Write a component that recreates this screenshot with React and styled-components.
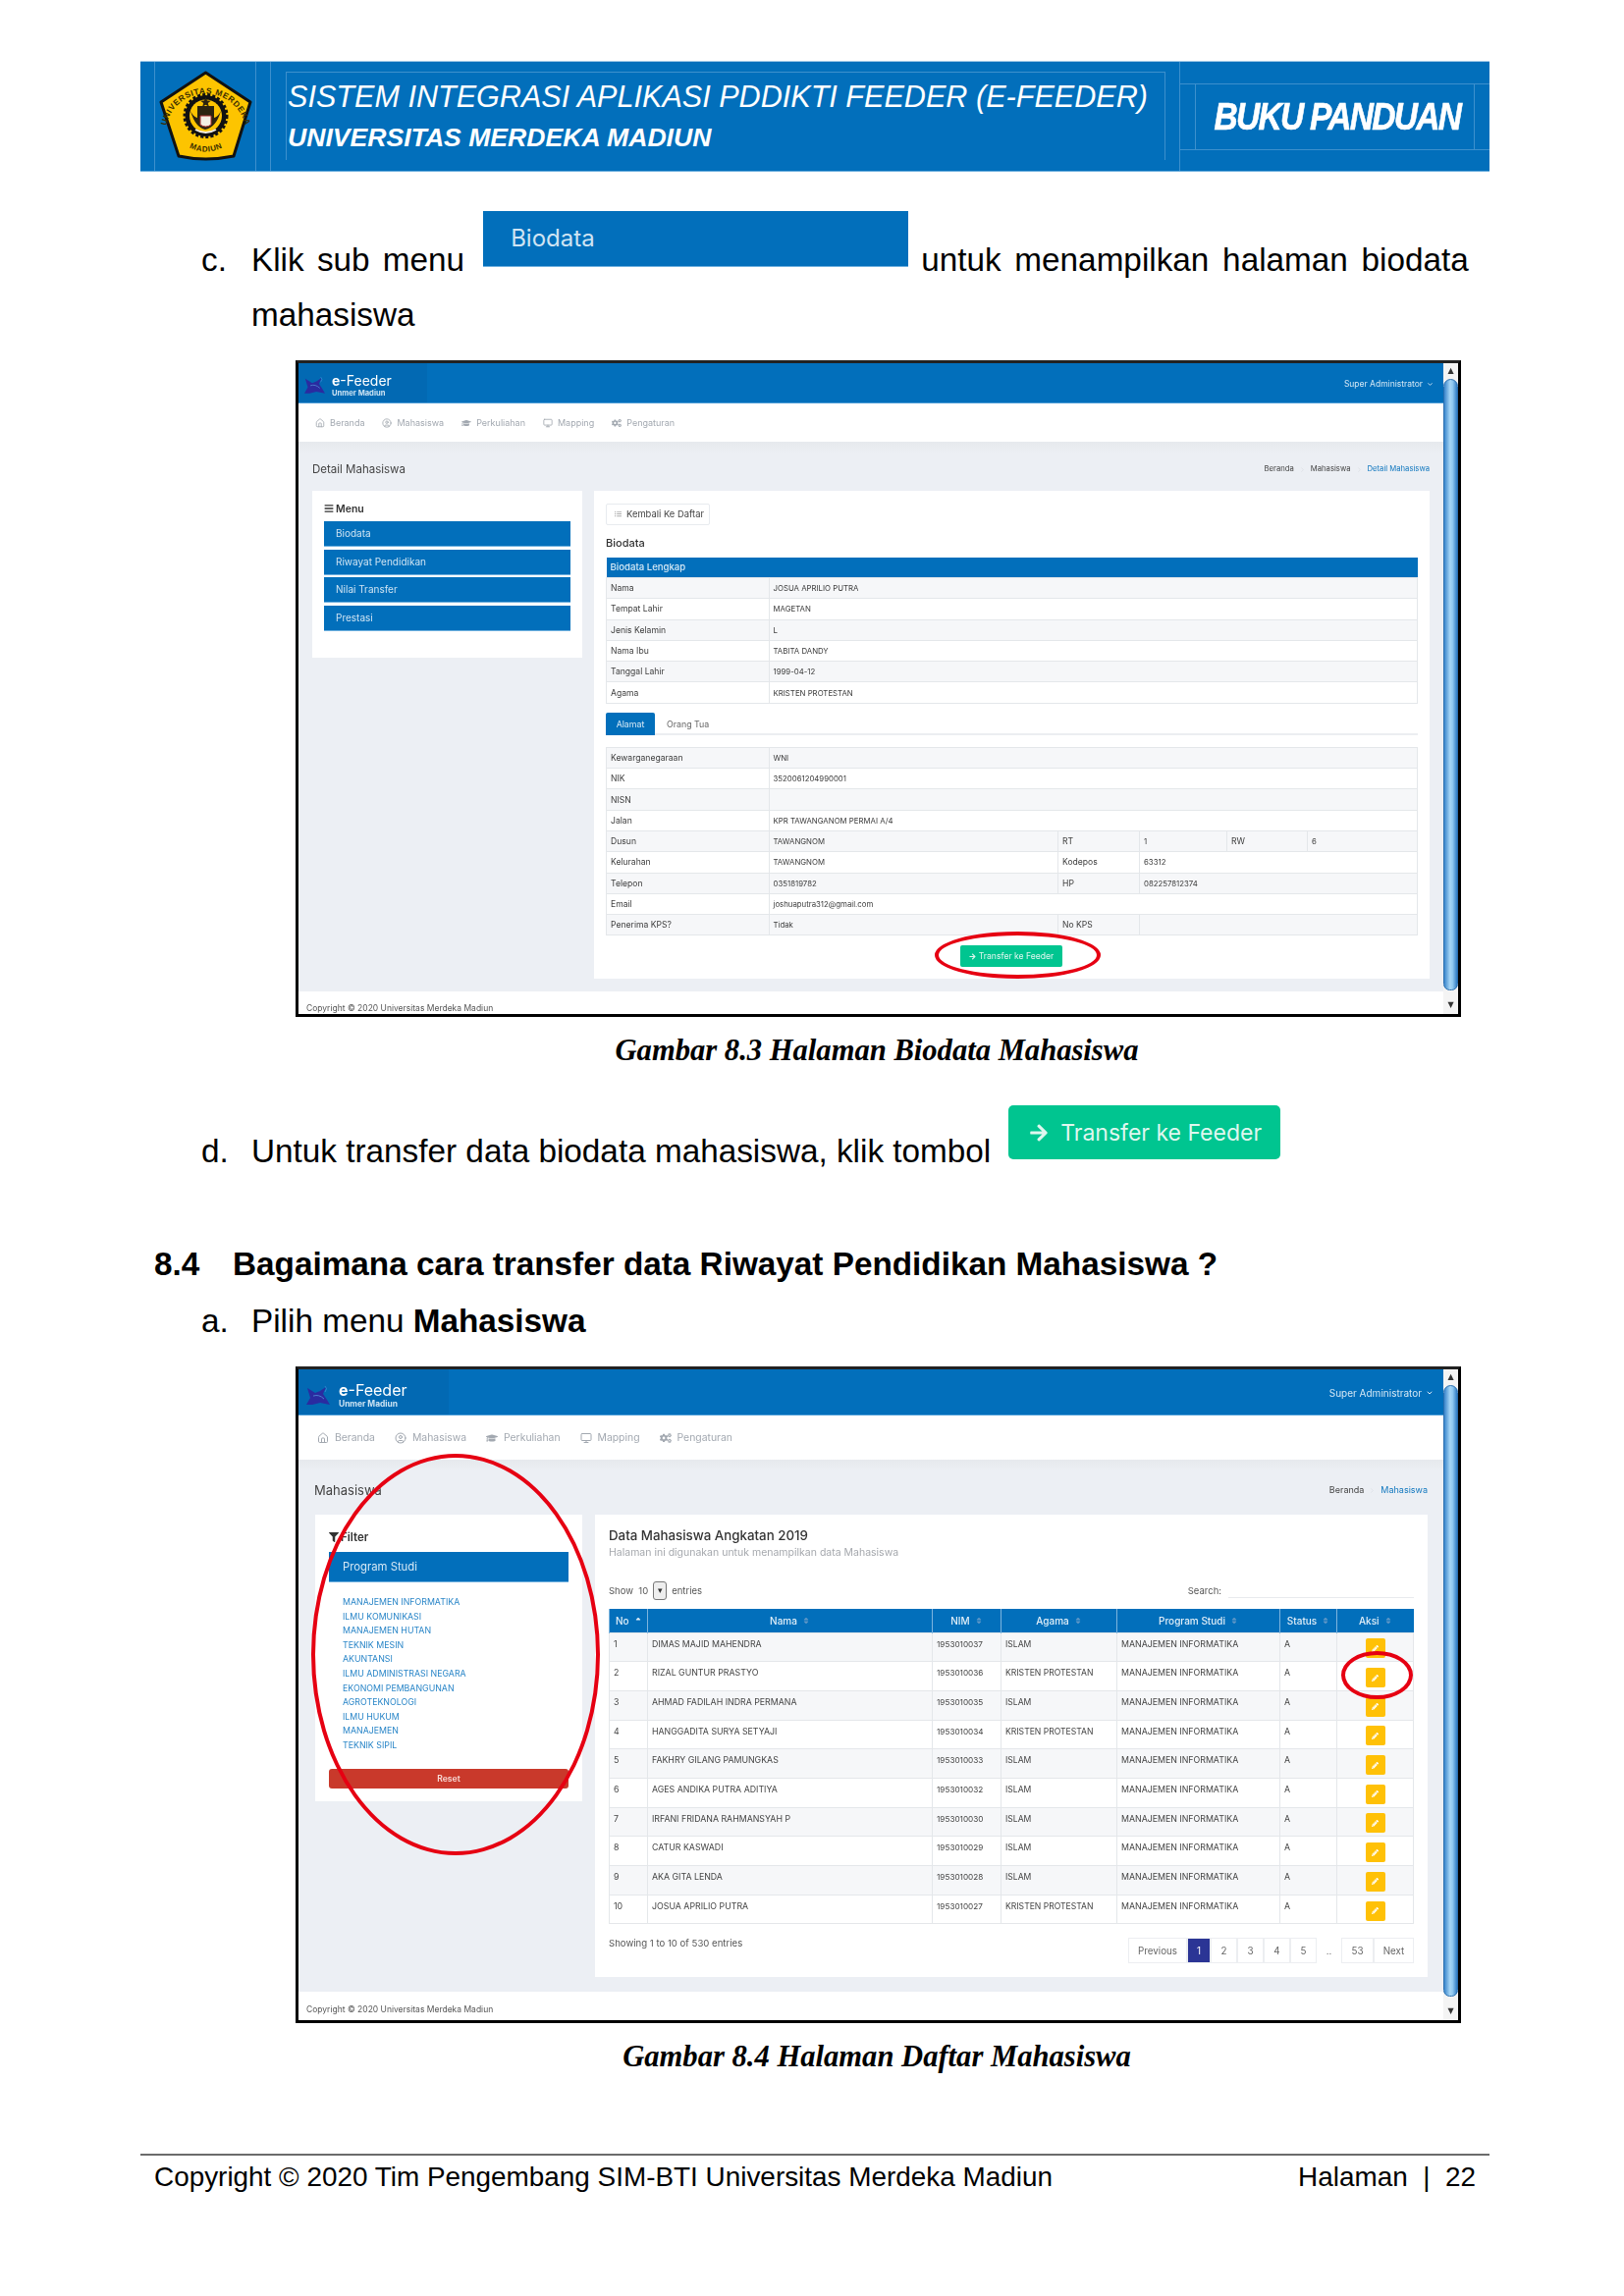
import React from 'react';
import styled, { createGlobalStyle } from 'styled-components';
import { Home, CircleUser, Monitor, ChevronDown, ChevronRight } from 'lucide-react';
import { FaGraduationCap, FaCogs, FaFilter, FaBars, FaArrowRight, FaPencilAlt, FaListUl, FaSort, FaSortUp } from 'react-icons/fa';

const BLUE = '#026fbb';
const APP_FONT = 'Inter, "Noto Sans", sans-serif';

const biodata = [
  ['Nama', 'JOSUA APRILIO PUTRA'],
  ['Tempat Lahir', 'MAGETAN'],
  ['Jenis Kelamin', 'L'],
  ['Nama Ibu', 'TABITA DANDY'],
  ['Tanggal Lahir', '1999-04-12'],
  ['Agama', 'KRISTEN PROTESTAN'],
];

const prodi = [
  'MANAJEMEN INFORMATIKA', 'ILMU KOMUNIKASI', 'MANAJEMEN HUTAN', 'TEKNIK MESIN', 'AKUNTANSI',
  'ILMU ADMINISTRASI NEGARA', 'EKONOMI PEMBANGUNAN', 'AGROTEKNOLOGI', 'ILMU HUKUM', 'MANAJEMEN', 'TEKNIK SIPIL',
];

const students = [
  ['1', 'DIMAS MAJID MAHENDRA', '1953010037', 'ISLAM'],
  ['2', 'RIZAL GUNTUR PRASTYO', '1953010036', 'KRISTEN PROTESTAN'],
  ['3', 'AHMAD FADILAH INDRA PERMANA', '1953010035', 'ISLAM'],
  ['4', 'HANGGADITA SURYA SETYAJI', '1953010034', 'KRISTEN PROTESTAN'],
  ['5', 'FAKHRY GILANG PAMUNGKAS', '1953010033', 'ISLAM'],
  ['6', 'AGES ANDIKA PUTRA ADITIYA', '1953010032', 'ISLAM'],
  ['7', 'IRFANI FRIDANA RAHMANSYAH P', '1953010030', 'ISLAM'],
  ['8', 'CATUR KASWADI', '1953010029', 'ISLAM'],
  ['9', 'AKA GITA LENDA', '1953010028', 'ISLAM'],
  ['10', 'JOSUA APRILIO PUTRA', '1953010027', 'KRISTEN PROTESTAN'],
];

function UnivLogo () {
  return (
    <svg width="95" height="93" viewBox="0 0 95 93">
      <defs>
        <path id="arcTop" d="M7 58 A41 41 0 0 1 88 58" />
        <path id="arcBottom" d="M25 75 Q47 90 71 75" />
      </defs>
      <path d="M47.5 2 L93 32 L76 87 Q47 93 20 87 L2 32 Z" fill="#fdc400" stroke="#111" strokeWidth="3" strokeLinejoin="round" />
      <text fontFamily="Liberation Sans, sans-serif" fontWeight="700" fontSize="8.4" fill="#3a2d00" letterSpacing=".6">
        <textPath href="#arcTop" startOffset="50%" textAnchor="middle">UNIVERSITAS MERDEKA</textPath>
      </text>
      <text fontFamily="Liberation Sans, sans-serif" fontWeight="700" fontSize="8" fill="#3a2d00" letterSpacing=".6">
        <textPath href="#arcBottom" startOffset="50%" textAnchor="middle">MADIUN</textPath>
      </text>
      <circle cx="47.5" cy="46" r="21" fill="#111" stroke="#111" strokeWidth="4" strokeDasharray="3 2" />
      <circle cx="47.5" cy="46" r="16.5" fill="#fdc400" />
      <path d="M32 41 Q37 58 47 60 Q58 58 63 41 Q60 47 56 48 L56 36 L39 36 L39 48 Q35 47 32 41 Z" fill="#2b2410" />
      <path d="M42 46 h11 v9 q-5.5 4-11 0 Z" fill="#f2efe4" stroke="#a33" strokeWidth="1" />
      <path d="M47.5 27 l1.5 3.6 3.8 .2-3 2.3 1.1 3.7-3.4-2.1-3.4 2.1 1.1-3.7-3-2.3 3.8-.2 Z" fill="#2b2410" />
      <path d="M37 60 Q47.5 66 58 60" fill="none" stroke="#f2efe4" strokeWidth="2" />
    </svg>
  );
}

function FeederLogo ({ size }) {
  return (
    <svg width={size} height={size * 0.84} viewBox="0 0 24 20">
      <path d="M1 2 L9 7 L14 5 L20 1 L17 8 L21 14 L24 19 L14 17 L6 19 L0 19 L4 12 Z" fill="#2a2ba0" />
      <path d="M7 10 Q13 8 18 13" fill="none" stroke="#4d7fd0" strokeWidth="1" />
      <path d="M19 0 Q22 2 19 6" fill="none" stroke="#3d8fd8" strokeWidth=".8" />
    </svg>
  );
}

function Scrollbar () {
  return (
    <ScrollColumn>
      <ScrollArrow>▲</ScrollArrow>
      <ScrollThumb />
      <ScrollArrow $bottom>▼</ScrollArrow>
    </ScrollColumn>
  );
}

function TopBar ({ big, logoSize, user }) {
  return (
    <Bar $big={big}>
      <Brand $big={big}>
        <FeederLogo size={logoSize} />
        <BrandText>
          <BrandName $big={big}><b>e</b>-Feeder</BrandName>
          <BrandSub $big={big}>Unmer Madiun</BrandSub>
        </BrandText>
      </Brand>
      <User $big={big}>{user} <ChevronDown size={big ? 8 : 7} strokeWidth={3} /></User>
    </Bar>
  );
}

function NavBar ({ big }) {
  const size = big ? 12 : 10;
  const items = [
    [<Home size={size} key="h" />, 'Beranda'],
    [<CircleUser size={size} key="u" />, 'Mahasiswa'],
    [<FaGraduationCap size={size} key="g" />, 'Perkuliahan'],
    [<Monitor size={size} key="m" />, 'Mapping'],
    [<FaCogs size={size} key="c" />, 'Pengaturan'],
  ];

  return (
    <Nav $big={big}>
      {items.map(([icon, label]) => <NavItem $big={big} key={label}>{icon}<span>{label}</span></NavItem>)}
    </Nav>
  );
}

function Crumbs ({ items, big }) {
  return (
    <CrumbRow $big={big}>
      {items.map((item, i) => (
        <React.Fragment key={item}>
          {i > 0 && <ChevronRight size={7} color="#d5d9df" />}
          <Crumb $active={i === items.length - 1}>{item}</Crumb>
        </React.Fragment>
      ))}
    </CrumbRow>
  );
}

function DetailShot () {
  return (
    <Frame $top={26}>
      <AppMain>
        <TopBar logoSize={21} user="Super Administrator" />
        <NavBar />
        <AppBody $h={560} $right={14}>
          <TitleRow $h={50} $pad={14}>
            <PageTitle>Detail Mahasiswa</PageTitle>
            <Crumbs items={['Beranda', 'Mahasiswa', 'Detail Mahasiswa']} />
          </TitleRow>
          <Cards $left={14}>
            <MenuCard>
              <MenuTitle><FaBars size={10} /> Menu</MenuTitle>
              {['Biodata', 'Riwayat Pendidikan', 'Nilai Transfer', 'Prestasi'].map(m => <MenuItem key={m}>{m}</MenuItem>)}
            </MenuCard>
            <DetailCard>
              <BackButton><FaListUl size={7} color="#aaa" /> Kembali Ke Daftar</BackButton>
              <SectionTitle>Biodata</SectionTitle>
              <InfoTable>
                <colgroup><Col $w={165.5} /><col /></colgroup>
                <thead><tr><InfoHead colSpan={2}>Biodata Lengkap</InfoHead></tr></thead>
                <tbody>
                  {biodata.map(([k, v]) => <InfoRow key={k}><InfoLabel>{k}</InfoLabel><InfoCell>{v}</InfoCell></InfoRow>)}
                </tbody>
              </InfoTable>
              <Tabs>
                <Tab $active>Alamat</Tab>
                <Tab>Orang Tua</Tab>
              </Tabs>
              <InfoTable $top={12}>
                <colgroup><Col $w={165.5} /><Col $w={294.5} /><Col $w={83} /><Col $w={89} /><Col $w={82} /><col /></colgroup>
                <tbody>
                  <InfoRow><InfoLabel>Kewarganegaraan</InfoLabel><InfoCell colSpan={5}>WNI</InfoCell></InfoRow>
                  <InfoRow><InfoLabel>NIK</InfoLabel><InfoCell colSpan={5}>3520061204990001</InfoCell></InfoRow>
                  <InfoRow><InfoLabel>NISN</InfoLabel><InfoCell colSpan={5} /></InfoRow>
                  <InfoRow><InfoLabel>Jalan</InfoLabel><InfoCell colSpan={5}>KPR TAWANGANOM PERMAI A/4</InfoCell></InfoRow>
                  <InfoRow>
                    <InfoLabel>Dusun</InfoLabel><InfoCell>TAWANGNOM</InfoCell><InfoLabel>RT</InfoLabel>
                    <InfoCell>1</InfoCell><InfoLabel>RW</InfoLabel><InfoCell>6</InfoCell>
                  </InfoRow>
                  <InfoRow>
                    <InfoLabel>Kelurahan</InfoLabel><InfoCell>TAWANGNOM</InfoCell><InfoLabel>Kodepos</InfoLabel>
                    <InfoCell colSpan={3}>63312</InfoCell>
                  </InfoRow>
                  <InfoRow>
                    <InfoLabel>Telepon</InfoLabel><InfoCell>0351819782</InfoCell><InfoLabel>HP</InfoLabel>
                    <InfoCell colSpan={3}>082257812374</InfoCell>
                  </InfoRow>
                  <InfoRow><InfoLabel>Email</InfoLabel><InfoCell colSpan={5}>joshuaputra312@gmail.com</InfoCell></InfoRow>
                  <InfoRow>
                    <InfoLabel>Penerima KPS?</InfoLabel><InfoCell>Tidak</InfoCell><InfoLabel>No KPS</InfoLabel>
                    <InfoCell colSpan={3} />
                  </InfoRow>
                </tbody>
              </InfoTable>
              <SmallTransfer><FaArrowRight size={7} /> Transfer ke Feeder</SmallTransfer>
            </DetailCard>
          </Cards>
        </AppBody>
        <AppFooter>Copyright © 2020 Universitas Merdeka Madiun</AppFooter>
      </AppMain>
      <Scrollbar />
      <Ellipse $l={648} $t={579} $w={169} $h={48} />
    </Frame>
  );
}

function ListShot () {
  const sortable = label => <HeadInner>{label}<FaSort size={8} color="#5f97c7" /></HeadInner>;

  return (
    <Frame $top={26}>
      <AppMain>
        <TopBar big logoSize={24} user="Super Administrator" />
        <NavBar big />
        <AppBody $h={542} $right={16}>
          <TitleRow $h={56} $pad={16} $big>
            <PageTitle $big>Mahasiswa</PageTitle>
            <Crumbs big items={['Beranda', 'Mahasiswa']} />
          </TitleRow>
          <Cards $left={17} $gap={13}>
            <FilterCard>
              <MenuTitle $big><FaFilter size={10} /> Filter</MenuTitle>
              <FilterBar>Program Studi</FilterBar>
              <ProdiList>{prodi.map(p => <ProdiItem key={p}>{p}</ProdiItem>)}</ProdiList>
              <ResetButton>Reset</ResetButton>
            </FilterCard>
            <ListCard>
              <ListTitle>Data Mahasiswa Angkatan 2019</ListTitle>
              <ListSub>Halaman ini digunakan untuk menampilkan data Mahasiswa</ListSub>
              <Controls>
                <ShowBox>Show&nbsp; 10 <SelectBox>▾</SelectBox> entries</ShowBox>
                <SearchBox>Search:<SearchLine /></SearchBox>
              </Controls>
              <DataTable>
                <colgroup>
                  <Col $w={39} /><Col $w={290} /><Col $w={70} /><Col $w={118} /><Col $w={166} /><Col $w={58} /><col />
                </colgroup>
                <thead>
                  <tr>
                    <DataHead $left><HeadInner>No<FaSortUp size={8} /></HeadInner></DataHead>
                    <DataHead>{sortable('Nama')}</DataHead>
                    <DataHead>{sortable('NIM')}</DataHead>
                    <DataHead>{sortable('Agama')}</DataHead>
                    <DataHead>{sortable('Program Studi')}</DataHead>
                    <DataHead>{sortable('Status')}</DataHead>
                    <DataHead>{sortable('Aksi')}</DataHead>
                  </tr>
                </thead>
                <tbody>
                  {students.map(([no, name, nim, agama]) => (
                    <DataRow key={no}>
                      <DataCell>{no}</DataCell>
                      <DataCell>{name}</DataCell>
                      <DataCell>{nim}</DataCell>
                      <DataCell>{agama}</DataCell>
                      <DataCell>MANAJEMEN INFORMATIKA</DataCell>
                      <DataCell>A</DataCell>
                      <ActionCell><EditButton><FaPencilAlt size={7} /></EditButton></ActionCell>
                    </DataRow>
                  ))}
                </tbody>
              </DataTable>
              <TableFoot>
                <span>Showing 1 to 10 of 530 entries</span>
                <Pager>
                  <PageButton $w={60}>Previous</PageButton>
                  <PageButton $w={24} $active>1</PageButton>
                  <PageButton $w={27}>2</PageButton>
                  <PageButton $w={27}>3</PageButton>
                  <PageButton $w={27}>4</PageButton>
                  <PageButton $w={27}>5</PageButton>
                  <PageDots>..</PageDots>
                  <PageButton $w={33}>53</PageButton>
                  <PageButton $w={41}>Next</PageButton>
                </Pager>
              </TableFoot>
            </ListCard>
          </Cards>
        </AppBody>
        <AppFooter $big>Copyright © 2020 Universitas Merdeka Madiun</AppFooter>
      </AppMain>
      <Scrollbar />
      <Ellipse $l={13} $t={86} $w={294} $h={409} />
      <Ellipse $l={1062} $t={287} $w={73} $h={49} />
    </Frame>
  );
}

export default function App () {
  return (
    <Page>
      <GlobalStyle />
      <Header>
        <HeaderEdge />
        <LogoCell><UnivLogo /></LogoCell>
        <HeaderGap />
        <TitleCell>
          <TitleInner>
            <MainTitle>SISTEM INTEGRASI APLIKASI PDDIKTI FEEDER (E-FEEDER)</MainTitle>
            <SubTitle>UNIVERSITAS MERDEKA MADIUN</SubTitle>
          </TitleInner>
        </TitleCell>
        <BookCell>
          <BookBand><BookFrame><BookTitle>BUKU PANDUAN</BookTitle></BookFrame></BookBand>
        </BookCell>
      </Header>

      <StepFirst>
        <Marker $top={30}>c.</Marker>
        <StepBody>
          <Spread>
            <StepWords $top={30} $spacing={4}>Klik sub menu</StepWords>
            <BiodataBanner>Biodata</BiodataBanner>
            <StepWords $top={30} $spacing={4.5}>untuk menampilkan halaman biodata</StepWords>
          </Spread>
          <StepLine>mahasiswa</StepLine>
        </StepBody>
      </StepFirst>

      <DetailShot />
      <Caption>Gambar 8.3 Halaman Biodata Mahasiswa</Caption>

      <StepSecond>
        <Marker $top={27}>d.</Marker>
        <StepWords $top={27}>Untuk transfer data biodata mahasiswa, klik tombol</StepWords>
        <BigTransfer><FaArrowRight size={20} /> Transfer ke Feeder</BigTransfer>
      </StepSecond>

      <Heading><HeadingNo>8.4</HeadingNo>Bagaimana cara transfer data Riwayat Pendidikan Mahasiswa ?</Heading>
      <StepThird>
        <Marker>a.</Marker>
        <StepWords>Pilih menu <b>Mahasiswa</b></StepWords>
      </StepThird>

      <ListShot />
      <Caption>Gambar 8.4 Halaman Daftar Mahasiswa</Caption>

      <Footer>
        <span>Copyright © 2020 Tim Pengembang SIM-BTI Universitas Merdeka Madiun</span>
        <span>Halaman &nbsp;|&nbsp; 22</span>
      </Footer>
    </Page>
  );
}

const GlobalStyle = createGlobalStyle`
  html, body { margin: 0; padding: 0; background: #fff; }
  * { box-sizing: border-box; }
`;

const Page = styled.div`
  width: 1654px;
  height: 2339px;
  padding-top: 62px;
  overflow: hidden;
  font-family: "Liberation Sans", Arial, sans-serif;
  color: #000;
`;

const Header = styled.header`
  display: flex;
  width: 1374px;
  height: 113px;
  margin-left: 143px;
  background: ${BLUE};
  border-top: 1px solid #9cc7e6;
  border-bottom: 1px solid #6fb0de;
  color: #fff;
  --line: 1px solid #3d90cd;
`;

const HeaderEdge = styled.div`
  width: 15px;
  flex-shrink: 0;
  border-right: var(--line);
`;

const LogoCell = styled.div`
  width: 103px;
  flex-shrink: 0;
  border-right: var(--line);
  display: flex;
  align-items: center;
  justify-content: center;
`;

const HeaderGap = styled.div`
  width: 15px;
  flex-shrink: 0;
  border-right: var(--line);
`;

const TitleCell = styled.div`
  width: 926px;
  flex-shrink: 0;
  border-right: var(--line);
  padding: 10px 14px 10px 15px;
`;

const TitleInner = styled.div`
  height: 90px;
  border-top: var(--line);
  border-left: var(--line);
  border-right: var(--line);
  padding-left: 1px;
`;

const MainTitle = styled.div`
  font-style: italic;
  font-size: 30.6px;
  line-height: 38px;
  margin-top: 5px;
  white-space: nowrap;
`;

const SubTitle = styled.div`
  font-style: italic;
  font-weight: 700;
  font-size: 26.6px;
  line-height: 34px;
  margin-top: 6px;
  white-space: nowrap;
`;

const BookCell = styled.div`
  flex: 1;
  min-width: 0;
  display: flex;
  align-items: center;
`;

const BookBand = styled.div`
  width: 100%;
  height: 68px;
  border-top: var(--line);
  border-bottom: var(--line);
  padding: 0 15px;
`;

const BookFrame = styled.div`
  height: 100%;
  border-left: var(--line);
  border-right: var(--line);
  display: flex;
  align-items: center;
  justify-content: center;
  padding-left: 5px;
`;

const BookTitle = styled.div`
  font-style: italic;
  font-weight: 700;
  font-size: 39px;
  letter-spacing: -2px;
  white-space: nowrap;
  -webkit-text-stroke: .6px #fff;
  transform: scaleX(.86);
`;

const StepFirst = styled.div`
  display: flex;
  margin: 40px 0 0 205px;
  width: 1290px;
`;

const Marker = styled.div`
  width: 51px;
  flex-shrink: 0;
  font-size: 33.3px;
  line-height: 40px;
  padding-top: ${p => p.$top || 0}px;
`;

const StepBody = styled.div`
  flex: 1;
`;

const Spread = styled.div`
  display: flex;
  align-items: flex-start;
`;

const StepWords = styled.div`
  font-size: 33.3px;
  line-height: 40px;
  padding-top: ${p => p.$top || 0}px;
  word-spacing: ${p => p.$spacing || 0}px;
  white-space: nowrap;
`;

const StepLine = styled.div`
  font-size: 33.3px;
  line-height: 40px;
  margin-top: 16px;
`;

const BiodataBanner = styled.div`
  width: 433px;
  height: 57px;
  flex-shrink: 0;
  margin: 0 13px 0 19px;
  background: ${BLUE};
  border-bottom: 1px solid #6fb0de;
  color: #cfe4f3;
  font-family: ${APP_FONT};
  font-size: 24px;
  padding: 13px 0 0 28px;
`;

const Frame = styled.div`
  position: relative;
  display: flex;
  width: 1187px;
  height: 669px;
  margin: ${p => p.$top}px 0 0 301px;
  border: 3px solid #000;
  border-top-color: #222;
  background: #fff;
  font-family: ${APP_FONT};
  filter: blur(.3px);
`;

const AppMain = styled.div`
  flex: 1;
  min-width: 0;
  display: flex;
  flex-direction: column;
`;

const ScrollColumn = styled.div`
  width: 15px;
  display: flex;
  flex-direction: column;
  background: #f4f4f4;
`;

const ScrollArrow = styled.div`
  height: ${p => p.$bottom ? 24 : 16}px;
  font-family: "DejaVu Sans", sans-serif;
  font-size: 8px;
  color: #333;
  text-align: center;
  line-height: 14px;
  padding-top: ${p => p.$bottom ? 8 : 1}px;
`;

const ScrollThumb = styled.div`
  flex: 1;
  border-radius: 8px 8px 7px 7px;
  border: 1px solid #2a6fb0;
  background: linear-gradient(90deg, #3a86cc, #a6d6f6 45%, #8ec7f0 65%, #2f7bc4);
`;

const Bar = styled.div`
  height: ${p => p.$big ? 47 : 41}px;
  flex-shrink: 0;
  display: flex;
  justify-content: space-between;
  align-items: center;
  background: ${BLUE};
  border-bottom: 1px solid #4d9cd6;
  color: #fff;
`;

const Brand = styled.div`
  width: ${p => p.$big ? 153 : 131}px;
  height: 100%;
  display: flex;
  align-items: center;
  gap: ${p => p.$big ? 9 : 7}px;
  padding: ${p => p.$big ? 8 : 6}px 0 0 ${p => p.$big ? 8 : 6}px;
  background: #0269b3;
`;

const BrandText = styled.div`
  display: flex;
  flex-direction: column;
`;

const BrandName = styled.div`
  font-size: ${p => p.$big ? 16 : 14}px;
  line-height: 1;
`;

const BrandSub = styled.div`
  font-size: ${p => p.$big ? 8.4 : 7.6}px;
  font-weight: 700;
  line-height: 1.2;
  color: #cde3f3;
  margin-top: 1px;
  white-space: nowrap;
`;

const User = styled.div`
  display: flex;
  align-items: center;
  gap: 4px;
  font-size: ${p => p.$big ? 10 : 8.5}px;
  color: #d5e8f5;
  padding-right: 10px;
  margin-top: 2px;
`;

const Nav = styled.nav`
  height: ${p => p.$big ? 45 : 39}px;
  flex-shrink: 0;
  display: flex;
  align-items: center;
  gap: ${p => p.$big ? 20 : 18}px;
  padding: 0 0 0 ${p => p.$big ? 19 : 17}px;
  background: #fff;
  color: #a2a8b0;
`;

const NavItem = styled.div`
  display: flex;
  align-items: center;
  gap: ${p => p.$big ? 6 : 5}px;
  font-size: ${p => p.$big ? 10.4 : 9}px;
`;

const AppBody = styled.div`
  height: ${p => p.$h}px;
  flex-shrink: 0;
  background: linear-gradient(#e6e9ed, #eceff4 12px);
  padding-right: ${p => p.$right}px;
`;

const TitleRow = styled.div`
  height: ${p => p.$h}px;
  display: flex;
  justify-content: space-between;
  align-items: flex-end;
  padding: 0 0 ${p => p.$big ? 17 : 14}px ${p => p.$pad}px;
`;

const PageTitle = styled.div`
  font-size: ${p => p.$big ? 13 : 11.5}px;
  line-height: 16px;
  color: #444;
`;

const CrumbRow = styled.div`
  display: flex;
  align-items: center;
  gap: 5px;
  font-size: ${p => p.$big ? 9 : 7.7}px;
  line-height: 14px;
  margin-bottom: 1px;
`;

const Crumb = styled.span`
  color: ${p => p.$active ? '#1278bf' : '#444'};
`;

const Cards = styled.div`
  display: flex;
  gap: ${p => p.$gap || 12}px;
  padding-left: ${p => p.$left}px;
`;

const MenuCard = styled.aside`
  width: 275px;
  height: 170px;
  flex-shrink: 0;
  background: #fff;
  padding: 12px;
`;

const MenuTitle = styled.div`
  display: flex;
  align-items: center;
  gap: 2px;
  height: 14px;
  font-size: ${p => p.$big ? 11.5 : 10.5}px;
  font-weight: 600;
  color: #333;
  margin: ${p => p.$big ? 2 : -1}px 0 ${p => p.$big ? 8 : 6}px;
`;

const MenuItem = styled.div`
  height: 26px;
  margin-bottom: 2.5px;
  padding-left: 12px;
  background: ${BLUE};
  border-bottom: 1px solid #6fb0de;
  color: #cfe4f3;
  font-size: 10px;
  line-height: 25px;
`;

const DetailCard = styled.section`
  flex: 1;
  height: 497px;
  background: #fff;
  padding: 11px 12px 12px;
`;

const BackButton = styled.div`
  display: inline-flex;
  align-items: center;
  gap: 5px;
  width: 106px;
  height: 22px;
  padding-left: 8px;
  border: 1px solid #e8ebef;
  border-radius: 2px;
  font-size: 9.4px;
  color: #444;
  white-space: nowrap;
`;

const SectionTitle = styled.div`
  height: 33px;
  font-size: 11px;
  font-weight: 500;
  color: #333;
  line-height: 36px;
`;

const InfoTable = styled.table`
  width: 100%;
  table-layout: fixed;
  border-collapse: collapse;
  margin-top: ${p => p.$top || 0}px;
  font-size: 7.8px;
  color: #3c3c3c;
`;

const Col = styled.col`
  width: ${p => p.$w}px;
`;

const InfoHead = styled.th`
  height: 21px;
  padding: 0 4px;
  background: ${BLUE};
  color: #d9eaf6;
  font-size: 9.6px;
  font-weight: 500;
  text-align: left;
`;

const InfoRow = styled.tr`
  height: 21.3px;
  &:nth-child(odd) { background: #f6f7f9; }
`;

const InfoCell = styled.td`
  padding: 0 4px;
  border: 1px solid #e4e7ea;
  white-space: nowrap;
  overflow: hidden;
`;

const InfoLabel = styled(InfoCell)`
  font-size: 8.6px;
`;

const Tabs = styled.div`
  display: flex;
  align-items: stretch;
  height: 23px;
  margin-top: 9px;
  border-bottom: 2px solid #eceef1;
`;

const Tab = styled.div`
  ${p => p.$active ? 'width: 50px;' : 'padding-left: 12px;'}
  display: flex;
  align-items: center;
  justify-content: ${p => p.$active ? 'center' : 'flex-start'};
  margin-bottom: -2px;
  border-radius: 2px 2px 0 0;
  background: ${p => p.$active ? BLUE : 'transparent'};
  color: ${p => p.$active ? '#d9eaf6' : '#666'};
  font-size: 8.8px;
`;

const SmallTransfer = styled.div`
  display: flex;
  align-items: center;
  justify-content: center;
  gap: 3px;
  width: 104px;
  height: 22px;
  margin: 10px 0 0 361px;
  border-radius: 2px;
  background: #00c590;
  color: #dff7ef;
  font-size: 8.6px;
  white-space: nowrap;
`;

const AppFooter = styled.div`
  flex: 1;
  display: flex;
  align-items: flex-end;
  padding: 0 0 ${p => p.$big ? 6 : 1}px 8px;
  font-size: 8.5px;
  color: #555;
  background: #fff;
`;

const Ellipse = styled.div`
  position: absolute;
  left: ${p => p.$l}px;
  top: ${p => p.$t}px;
  width: ${p => p.$w}px;
  height: ${p => p.$h}px;
  border: 4px solid #e60012;
  border-radius: 50%;
  pointer-events: none;
`;

const FilterCard = styled.aside`
  width: 272px;
  height: 292px;
  flex-shrink: 0;
  background: #fff;
  padding: 14px;
`;

const FilterBar = styled.div`
  height: 31px;
  padding-left: 14px;
  background: ${BLUE};
  border-bottom: 1px solid #6fb0de;
  color: #d5e8f5;
  font-size: 11.3px;
  line-height: 30px;
`;

const ProdiList = styled.div`
  padding: 13px 0 0 14px;
  height: 190px;
`;

const ProdiItem = styled.div`
  height: 14.6px;
  line-height: 14.6px;
  font-size: 8.8px;
  color: #2a86c8;
  white-space: nowrap;
`;

const ResetButton = styled.div`
  height: 20px;
  border-radius: 3px;
  background: #c9392b;
  color: #f8dcd8;
  font-size: 8.6px;
  font-weight: 600;
  line-height: 20px;
  text-align: center;
`;

const ListCard = styled.section`
  flex: 1;
  height: 471px;
  background: #fff;
  padding: 14px;
`;

const ListTitle = styled.div`
  font-size: 13.3px;
  font-weight: 500;
  line-height: 14px;
  color: #333;
`;

const ListSub = styled.div`
  font-size: 10.5px;
  line-height: 12px;
  margin-top: 5px;
  color: #a5a8ad;
  white-space: nowrap;
`;

const Controls = styled.div`
  display: flex;
  justify-content: space-between;
  align-items: center;
  height: 20px;
  margin: 22px 0 9px;
  font-size: 9.5px;
  color: #555;
`;

const ShowBox = styled.div`
  display: flex;
  align-items: center;
  gap: 5px;
`;

const SelectBox = styled.span`
  width: 14px;
  height: 19px;
  border: 1px solid #777;
  border-radius: 3px;
  background: #eee;
  font-size: 9px;
  line-height: 16px;
  text-align: center;
  color: #333;
`;

const SearchBox = styled.div`
  display: flex;
  align-items: center;
  gap: 7px;
`;

const SearchLine = styled.span`
  display: block;
  width: 189px;
  height: 15px;
  border-bottom: 1px solid #e8eaed;
`;

const DataTable = styled.table`
  width: 100%;
  table-layout: fixed;
  border-collapse: collapse;
  font-size: 8.8px;
  color: #444;
`;

const DataHead = styled.th`
  height: 24px;
  padding: ${p => p.$left ? '0 0 0 6px' : 0};
  text-align: ${p => p.$left ? 'left' : 'center'};
  background: ${BLUE};
  border-left: 1px solid #7db5de;
  color: #e2eff8;
  font-size: 10px;
  font-weight: 500;
`;

const HeadInner = styled.span`
  display: inline-flex;
  align-items: center;
  gap: 5px;
`;

const DataRow = styled.tr`
  height: 29.7px;
  &:nth-child(odd) { background: #f6f7f9; }
  td:nth-child(3) { font-size: 8.2px; }
  td:nth-child(4) { font-size: 8.6px; }
`;

const DataCell = styled.td`
  padding: 5px 4px 0;
  vertical-align: top;
  line-height: 12px;
  border: 1px solid #e4e7ea;
  white-space: nowrap;
  overflow: hidden;
`;

const ActionCell = styled.td`
  padding: 0;
  border: 1px solid #e4e7ea;
  vertical-align: middle;
`;

const EditButton = styled.div`
  display: flex;
  align-items: center;
  justify-content: center;
  width: 20px;
  height: 20px;
  margin: 3px auto 0;
  border-radius: 2px;
  background: #ffc107;
  color: #fff;
`;

const TableFoot = styled.div`
  display: flex;
  justify-content: space-between;
  align-items: flex-start;
  margin-top: 14px;
  font-size: 9.6px;
  color: #555;
`;

const Pager = styled.div`
  display: flex;
  align-items: stretch;
  height: 26px;
`;

const PageButton = styled.div`
  width: ${p => p.$w}px;
  display: flex;
  align-items: center;
  justify-content: center;
  border: 1px solid #eceef1;
  background: ${p => p.$active ? '#2b3595' : '#fff'};
  color: ${p => p.$active ? '#fff' : '#666'};
  font-size: 9.8px;
`;

const PageDots = styled.div`
  width: 25px;
  display: flex;
  align-items: center;
  justify-content: center;
  color: #777;
`;

const Caption = styled.div`
  margin-top: 16px;
  text-align: center;
  width: 1786px;
  font-family: "Liberation Serif", "Times New Roman", serif;
  font-style: italic;
  font-weight: 700;
  font-size: 30.6px;
  line-height: 36px;
`;

const StepSecond = styled.div`
  display: flex;
  align-items: flex-start;
  margin: 38px 0 0 205px;
`;

const BigTransfer = styled.div`
  display: flex;
  align-items: center;
  gap: 12px;
  width: 277px;
  height: 55px;
  margin-left: 18px;
  padding-left: 21px;
  border-radius: 5px;
  background: #00c590;
  color: #dff7ef;
  font-family: ${APP_FONT};
  font-size: 23px;
  white-space: nowrap;
`;

const Heading = styled.h2`
  display: flex;
  margin: 75px 0 0 157px;
  font-size: 33.3px;
  font-weight: 700;
  line-height: 40px;
`;

const HeadingNo = styled.span`
  width: 80px;
`;

const StepThird = styled.div`
  display: flex;
  margin: 18px 0 0 205px;
`;

const Footer = styled.footer`
  display: flex;
  justify-content: space-between;
  width: 1374px;
  margin: 81px 0 0 143px;
  padding: 4px 14px 0 14px;
  border-top: 2px solid #6b6b6b;
  font-size: 27.9px;
  line-height: 36px;
`;
